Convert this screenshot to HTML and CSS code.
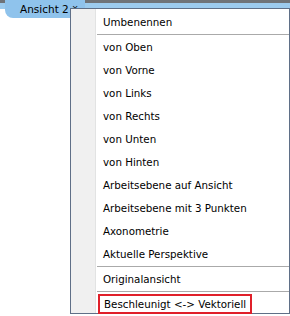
FILE: index.html
```html
<!DOCTYPE html>
<html lang="de">
<head>
    <meta charset="UTF-8">
    <title>Ansicht Menü</title>
    <link rel="stylesheet" href="styles.css">
</head>
<body>
    <!-- Tab bar -->
    <div class="tabbar">
        <div class="tab">Ansicht 2<span class="close">&times;</span></div>
    </div>

    <!-- Context menu -->
    <div class="menu">
        <div class="item">Umbenennen</div>
        <div class="sep"></div>
        <div class="item">von Oben</div>
        <div class="item">von Vorne</div>
        <div class="item">von Links</div>
        <div class="item">von Rechts</div>
        <div class="item">von Unten</div>
        <div class="item">von Hinten</div>
        <div class="item">Arbeitsebene auf Ansicht</div>
        <div class="item">Arbeitsebene mit 3 Punkten</div>
        <div class="item">Axonometrie</div>
        <div class="item">Aktuelle Perspektive</div>
        <div class="sep"></div>
        <div class="item">Originalansicht</div>
        <div class="sep"></div>
        <div class="item marked"><span class="box">Beschleunigt &lt;-&gt; Vektoriell</span></div>
    </div>
</body>
</html>
```

FILE: styles.css
```css
body {
    margin: 0;
    width: 290px;
    height: 316px;
    background-color: #ffffff;
    font-family: "DejaVu Sans", Tahoma, sans-serif;
    font-size: 10.3px;
    color: #000000;
    position: relative;
    overflow: hidden;
}

.tabbar {
    height: 9px;
    background-color: #9ccbee;
    border-top: 3px solid #6f7378;
    box-sizing: border-box;
}

.tab {
    position: absolute;
    left: 5px;
    top: 0;
    width: 80px;
    height: 18px;
    background-color: #8fc3ec;
    border-bottom-left-radius: 8px;
    box-sizing: border-box;
    padding: 2px 0 0 15px;
    font-size: 10.5px;
    line-height: 14px;
    white-space: nowrap;
}

.tab .close {
    font-size: 8px;
    vertical-align: top;
    margin-left: 3px;
}

.menu {
    position: absolute;
    left: 70px;
    top: 8px;
    right: 0;
    bottom: 2px;
    background-color: #fcfcfc;
    background-image: linear-gradient(to right, #f0f0f0 0, #f0f0f0 24px, #e2e3e3 24px, #e2e3e3 25px, #ffffff 25px);
    border: 1px solid #5f6f87;
    box-sizing: border-box;
    padding: 2px 0;
}

.item {
    height: 23px;
    line-height: 23px;
    padding-left: 32px;
    white-space: nowrap;
}

.sep {
    height: 1px;
    margin: 0 0 1px 26px;
    background-color: #aaaaaa;
}

.marked {
    padding-left: 27px;
}

.box {
    display: inline-block;
    line-height: 14px;
    padding: 1px 4px;
    border: 2px solid #e0202a;
}
```
